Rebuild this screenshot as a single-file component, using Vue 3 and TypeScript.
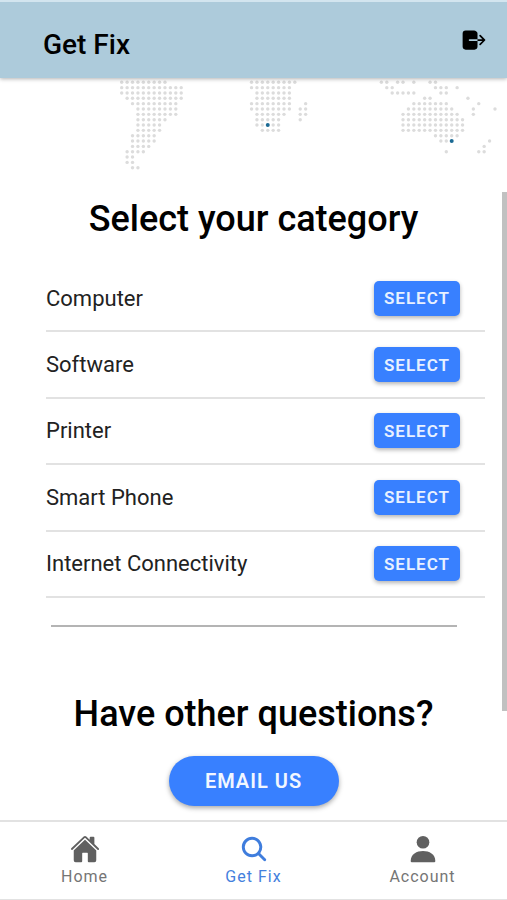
<script setup lang="ts">
import { ref } from 'vue'

type Span = [row: number, from: number, to: number]
type Tab = 'home' | 'fix' | 'account'

const categories: string[] = ['Computer', 'Software', 'Printer', 'Smart Phone', 'Internet Connectivity']
const activeTab = ref<Tab>('fix')

// Runs of land dots on the map grid
const spans: Span[] = [
  [0, 0, 8], [1, 0, 11], [2, 0, 11], [3, 1, 11], [4, 2, 10], [5, 3, 10], [6, 3, 10], [7, 3, 8],
  [8, 3, 7], [9, 3, 7], [10, 2, 6], [11, 2, 6], [12, 2, 5], [13, 1, 4], [14, 1, 2], [15, 1, 2], [16, 2, 3],
  [0, 24, 32], [1, 24, 31], [2, 25, 31], [3, 25, 31], [4, 24, 31], [4, 34, 34], [5, 24, 31], [5, 33, 34],
  [6, 25, 30], [6, 33, 34], [7, 25, 29], [7, 33, 33], [8, 25, 26], [8, 28, 29], [9, 26, 29],
  [0, 48, 49], [0, 51, 52], [0, 54, 54], [0, 57, 58], [1, 49, 50], [1, 58, 60], [1, 62, 62],
  [2, 50, 54], [2, 59, 60], [3, 56, 57], [3, 64, 64], [4, 54, 60], [4, 66, 66], [5, 53, 61],
  [5, 65, 65], [5, 69, 69], [6, 52, 62], [6, 65, 65], [7, 52, 63], [8, 52, 63], [9, 52, 63],
  [10, 58, 62], [11, 59, 60], [11, 68, 68], [12, 67, 67], [13, 60, 60], [13, 66, 67],
]
const cx = (col: number): number => 121.7 + col * 5.41
const cy = (row: number): number => 4.3 + row * 5.34
const dots = spans.flatMap(([row, from, to]) =>
  Array.from({ length: to - from + 1 }, (_, i) => ({ x: cx(from + i), y: cy(row) })),
)
const offices = [
  { x: cx(27), y: cy(8) },
  { x: cx(61), y: cy(11) },
]
</script>

<template>
  <div class="app">
    <header class="bar">
      <h1>Get Fix</h1>
      <button class="logout" type="button" aria-label="Log out">
        <svg viewBox="0 0 512 512" aria-hidden="true">
          <path d="M160 256a16 16 0 0116-16h144V136c0-32-33.79-56-64-56H104a56.06 56.06 0 00-56 56v240a56.06 56.06 0 0056 56h160a56.06 56.06 0 0056-56V272H176a16 16 0 01-16-16zM459.31 244.69l-80-80a16 16 0 00-22.62 22.62L409.37 240H320v32h89.37l-52.68 52.69a16 16 0 1022.62 22.62l80-80a16 16 0 000-22.62z" />
        </svg>
      </button>
    </header>

    <main>
      <svg class="map" viewBox="0 0 507 94" aria-hidden="true">
        <circle v-for="(d, i) in dots" :key="i" class="land" :cx="d.x" :cy="d.y" r="1.7" />
        <circle v-for="(o, i) in offices" :key="'o' + i" class="office" :cx="o.x" :cy="o.y" r="2" />
      </svg>

      <h2>Select your category</h2>
      <ul class="list">
        <li v-for="(c, i) in categories" :key="c">
          <span :id="'category-' + i">{{ c }}</span>
          <button class="select" type="button" :aria-describedby="'category-' + i">SELECT</button>
        </li>
      </ul>
      <hr />
      <section class="contact">
        <h2>Have other questions?</h2>
        <button class="email" type="button">EMAIL US</button>
      </section>
      <div class="thumb"></div>
    </main>

    <nav class="tabs">
      <a href="#home" :class="{ active: activeTab === 'home' }" @click.prevent="activeTab = 'home'">
        <svg viewBox="0 0 512 512" aria-hidden="true">
          <path d="M261.56 101.28a8 8 0 00-11.06 0L66.4 277.15a8 8 0 00-2.47 5.79L63.9 448a32 32 0 0032 32H192a16 16 0 0016-16V328a8 8 0 018-8h80a8 8 0 018 8v136a16 16 0 0016 16h96.06a32 32 0 0032-32V282.94a8 8 0 00-2.47-5.79z" />
          <path d="M490.91 244.15l-74.8-71.56V64a16 16 0 00-16-16h-48a16 16 0 00-16 16v32l-57.92-55.38C272.77 35.14 264.71 32 256 32c-8.68 0-16.72 3.14-22.14 8.63l-212.7 203.5c-6.22 6-7 15.87-1.34 22.37A16 16 0 0043 267.56L250.5 69.28a8 8 0 0111.06 0l207.52 198.28a16 16 0 0022.59-.44c6.14-6.36 5.63-16.86-.76-22.97z" />
        </svg>
        <span>Home</span>
      </a>
      <a href="#fix" :class="{ active: activeTab === 'fix' }" @click.prevent="activeTab = 'fix'">
        <svg viewBox="0 0 512 512" aria-hidden="true">
          <path d="M456.69 421.39L362.6 327.3a173.81 173.81 0 0034.84-104.58C397.44 126.38 319.06 48 222.72 48S48 126.38 48 222.72s78.38 174.72 174.72 174.72A173.81 173.81 0 00327.3 362.6l94.09 94.09a25 25 0 0035.3-35.3zM97.92 222.72a124.8 124.8 0 11124.8 124.8 124.95 124.95 0 01-124.8-124.8z" />
        </svg>
        <span>Get Fix</span>
      </a>
      <a href="#account" :class="{ active: activeTab === 'account' }" @click.prevent="activeTab = 'account'">
        <svg viewBox="0 0 512 512" aria-hidden="true">
          <circle cx="256" cy="140" r="108" />
          <path d="M46 460C46 345 150 290 256 290s210 55 210 170q0 20-18 20H64q-18 0-18-20z" />
        </svg>
        <span>Account</span>
      </a>
    </nav>
  </div>
</template>

<style>
body {
  background: #fff;
}
</style>

<style scoped>
.app {
  display: flex;
  flex-direction: column;
  min-height: 100vh;
  font-family: Roboto, "Liberation Sans", sans-serif;
  color: #000;
}

h1,
h2 {
  margin: 0;
  font-weight: 500;
}

button {
  padding: 0;
  border: 0;
  font-family: inherit;
  font-weight: 600;
  cursor: pointer;
}

.bar {
  box-sizing: border-box;
  display: flex;
  justify-content: space-between;
  align-items: flex-start;
  height: 78px;
  padding: 24px 19px 0 43px;
  border-top: 2px solid #d3e5ef;
  background: #adcbdb;
  box-shadow: 0 1px 4px rgba(0, 0, 0, 0.3);
  z-index: 1;
}

h1 {
  font-size: 28px;
  line-height: 38px;
}

.logout {
  background: none;
}

.logout svg {
  display: block;
  width: 28px;
  height: 28px;
}

main {
  flex: 1;
  position: relative;
  display: flex;
  flex-direction: column;
}

.map {
  display: block;
  width: 100%;
}

.land {
  fill: #dcdcdc;
}

.office {
  fill: #1b6a94;
}

h2 {
  font-size: 36px;
  line-height: 48px;
  text-align: center;
}

.map + h2 {
  margin: 23px 0;
}

.list {
  display: grid;
  grid-auto-rows: 1fr;
  min-height: 332px;
  margin: 0 22px 0 46px;
  padding: 0;
  list-style: none;
}

.list li {
  display: flex;
  justify-content: space-between;
  align-items: center;
  padding-right: 25px;
  border-bottom: 2px solid #e2e2e2;
  font-size: 22px;
  color: #222;
}

.select {
  width: 86px;
  height: 35px;
  border-radius: 5px;
  background: #3880ff;
  box-shadow: 0 2px 4px rgba(0, 0, 0, 0.3);
  color: #e8f1ff;
  font-size: 17px;
  letter-spacing: 1px;
}

hr {
  box-sizing: border-box;
  height: 2px;
  margin: 27px 50px 0 51px;
  border: 0;
  background: #b4b4b4;
}

.contact {
  display: flex;
  flex-direction: column;
  align-items: center;
  gap: 18px;
  padding: 63px 0 14px;
}

.email {
  width: 170px;
  height: 50px;
  border-radius: 25px;
  background: #3880ff;
  box-shadow: 0 2px 5px rgba(0, 0, 0, 0.35);
  color: #f2f7ff;
  font-size: 20px;
  letter-spacing: 1px;
}

/* Scroll position marker laid over the page's right edge */
.thumb {
  position: absolute;
  top: 114px;
  right: 0;
  width: 5px;
  height: 519px;
  background: #c1c1c1;
}

.tabs {
  display: grid;
  grid-template-columns: repeat(3, 1fr);
  border-top: 2px solid #e2e2e2;
  border-bottom: 1px solid #e2e2e2;
}

.tabs a {
  display: flex;
  flex-direction: column;
  align-items: center;
  gap: 2px;
  padding: 12px 0 11px;
  color: #757575;
  font-size: 16px;
  line-height: 22px;
  letter-spacing: 1px;
  text-decoration: none;
}

.tabs svg {
  width: 30px;
  height: 30px;
  fill: #606060;
}

.tabs .active {
  color: #4480dd;
}

.tabs .active svg {
  fill: #3f7ddd;
}
</style>
